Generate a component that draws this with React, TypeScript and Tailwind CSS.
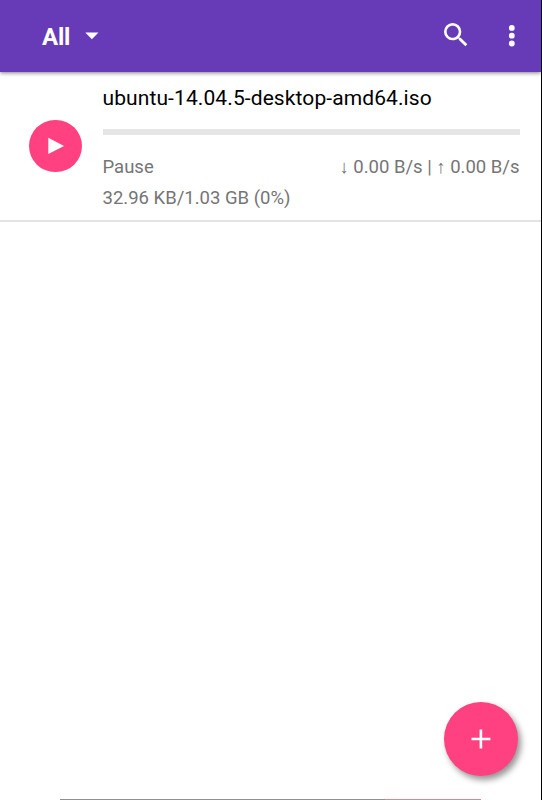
function Header() {
  return (
    <header className="relative z-10 flex h-[72px] shrink-0 items-center bg-[#673ab7] pl-[42px] pr-[17px] text-white shadow-[0_1px_4px_rgba(0,0,0,0.5)]">
      <button className="flex items-center">
        <span className="pt-[2px] text-[24px] font-bold leading-[28px] tracking-[-0.2px]">All</span>
        <svg className="ml-[14.5px]" width="14" height="8" viewBox="0 0 14 8" fill="currentColor">
          <path d="M0.3 0.6H13.5L6.9 7.2Z" />
        </svg>
      </button>
      <button className="ml-auto" aria-label="Search">
        <svg className="-mt-[2px]" width="32" height="32" viewBox="0 0 24 24" fill="currentColor">
          <path d="M15.5 14h-.79l-.28-.27A6.471 6.471 0 0 0 16 9.5 6.5 6.5 0 1 0 9.5 16c1.61 0 3.09-.59 4.23-1.57l.27.28v.79l5 4.99L20.49 19l-4.99-5zm-6 0C7.01 14 5 11.99 5 9.5S7.01 5 9.5 5 14 7.01 14 9.5 11.99 14 9.5 14z" />
        </svg>
      </button>
      <button className="ml-[28px]" aria-label="More options">
        <svg className="-mt-px" width="24" height="24" viewBox="0 0 24 24" fill="currentColor">
          <circle cx="11.8" cy="3.9" r="2.9" />
          <circle cx="11.8" cy="11.7" r="2.9" />
          <circle cx="11.8" cy="19.5" r="2.9" />
        </svg>
      </button>
    </header>
  );
}

function TorrentRow() {
  return (
    <article className="flex h-[150px] items-center border-b-2 border-[#e3e3e3] pl-[29px] pr-[21.5px]">
      <button className="flex size-[52.5px] shrink-0 items-center justify-center rounded-full bg-[#ff4081]" aria-label="Start">
        <svg className="ml-[1px]" width="16" height="18" viewBox="0 0 16 18" fill="white">
          <path d="M0.3 0.7V17.1L16 8.9Z" />
        </svg>
      </button>
      <div className="ml-[21px] flex h-full min-w-0 flex-1 flex-col pt-[14px]">
        <h2 className="whitespace-nowrap text-[21px] leading-[25px] tracking-[0.1px] text-black">ubuntu-14.04.5-desktop-amd64.iso</h2>
        <div className="mt-[18px] h-[6px] shrink-0 bg-[#e5e5e5]" />
        <div className="mt-[20px] flex justify-between whitespace-nowrap text-[18.5px] leading-[24px] text-[#757575]">
          <span>Pause</span>
          <span>↓ 0.00 B/s | ↑ 0.00 B/s</span>
        </div>
        <p className="mt-[7px] whitespace-nowrap text-[18.5px] leading-[24px] text-[#757575]">32.96 KB/1.03 GB (0%)</p>
      </div>
    </article>
  );
}

export default function App() {
  return (
    <div className="relative flex h-[800px] w-[542px] flex-col overflow-hidden border-r border-black bg-white font-['Roboto',sans-serif]">
      <Header />
      <TorrentRow />
      <div className="mt-auto flex h-px pl-[60px]">
        <div className="w-[325px] bg-[#8f8f8f]" />
        <div className="w-[96px] bg-[#e58585]" />
      </div>
      <button
        className="absolute bottom-[24px] right-[23px] flex size-[74px] items-center justify-center rounded-full bg-[#ff4081] shadow-[3px_4px_6px_rgba(0,0,0,0.42)]"
        aria-label="Add"
      >
        <svg width="20" height="20" viewBox="0 0 20 20" fill="white">
          <path d="M8.6 0.5H11.2V8.7H19.4V11.3H11.2V19.5H8.6V11.3H0.5V8.7H8.6Z" />
        </svg>
      </button>
    </div>
  );
}
